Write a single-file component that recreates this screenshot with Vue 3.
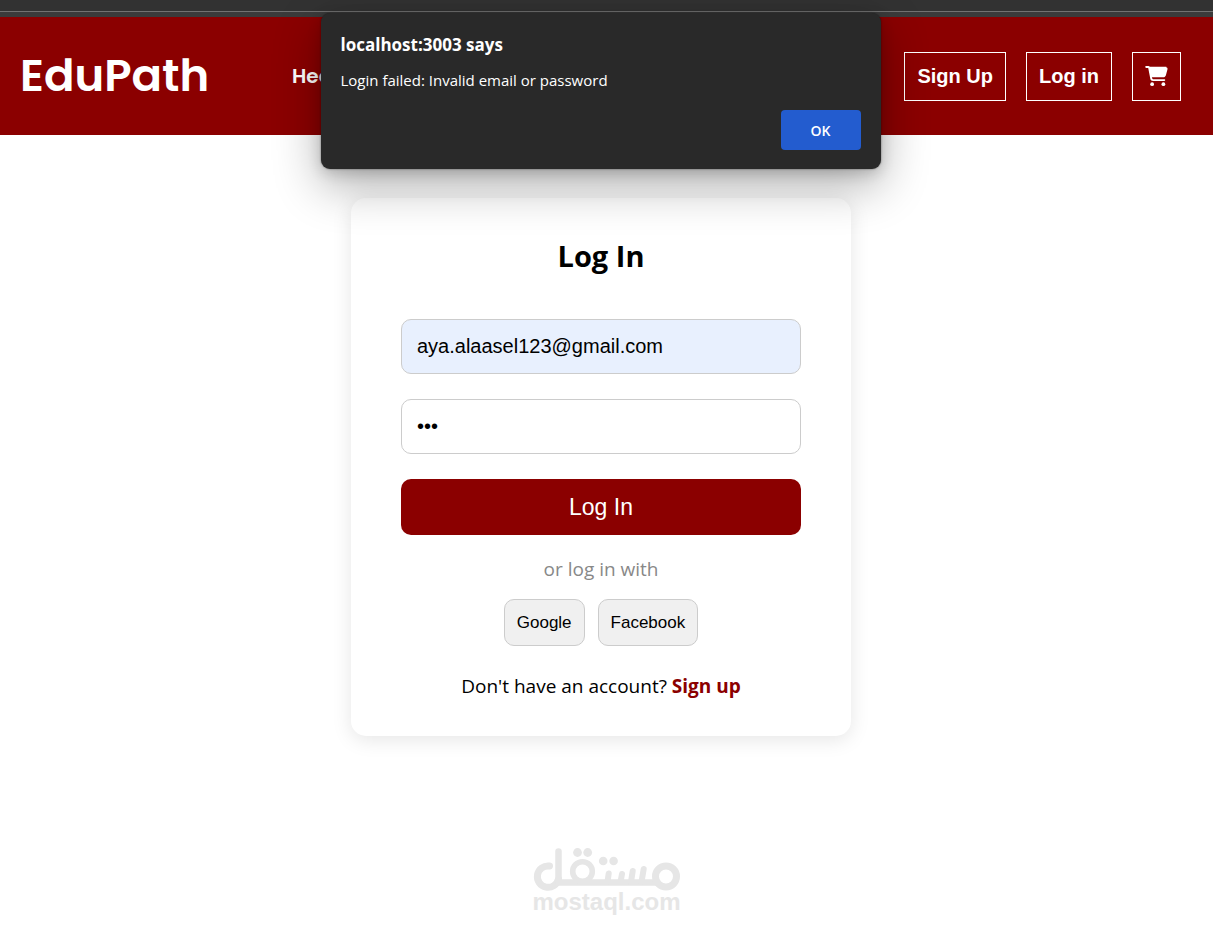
<script setup>
import { ref } from 'vue'

const email = ref('aya.alaasel123@gmail.com')
const password = ref('123')
const dialogOpen = ref(true)
</script>

<template>
  <div class="page">
    <div class="browser-edge"></div>

    <header class="site-header">
      <a class="brand" href="#">EduPath</a>
      <nav class="nav"><a href="#">Hea</a></nav>
      <div class="actions">
        <button type="button" class="outline">Sign Up</button>
        <button type="button" class="outline">Log in</button>
        <button type="button" class="outline cart" aria-label="Cart">
          <svg viewBox="0 0 576 512" width="23" height="20" fill="currentColor" aria-hidden="true">
            <path d="M0 24C0 10.700 10.700 0 24 0h45.500c22 0 41.500 12.800 50.600 32h411c26.300 0 45.500 25 38.600 50.400l-41 152.300c-8.500 31.400-37 53.300-69.500 53.300H170.700l5.400 28.500c2.200 11.300 12.100 19.500 23.600 19.500H488c13.300 0 24 10.700 24 24s-10.700 24-24 24H199.700c-34.600 0-64.300-24.600-70.700-58.500L77.400 54.500c-.7-3.800-4-6.500-7.900-6.500H24C10.700 48 0 37.300 0 24z" />
            <path d="M90 20H540L500 265H150z" />
            <circle cx="176" cy="464" r="48" />
            <circle cx="464" cy="464" r="48" />
          </svg>
        </button>
      </div>
    </header>

    <main class="content">
      <form class="card" @submit.prevent>
        <h2>Log In</h2>
        <input v-model="email" class="field filled" type="email" aria-label="Email" />
        <input v-model="password" class="field" type="password" aria-label="Password" />
        <button type="submit" class="submit">Log In</button>
        <p class="or">or log in with</p>
        <div class="social">
          <button type="button">Google</button>
          <button type="button">Facebook</button>
        </div>
        <p class="signup">Don't have an account? <a href="#">Sign up</a></p>
      </form>
    </main>

    <footer class="mark">
      <svg viewBox="0 0 148 44" width="148" height="44" role="img" aria-label="مستقل" fill="none" stroke="#e6e6e6" stroke-width="7" stroke-linecap="round">
        <path d="M16.500 18A10.700 10.700 0 1 0 25.500 31" />
        <path d="M25.500 3.500V34.500H124" stroke-width="6.500" stroke-linejoin="round" />
        <circle cx="49.500" cy="23.500" r="9.800" stroke-width="5.600" />
        <circle cx="133" cy="28.500" r="10.500" />
        <path d="M75.700 25.500L74.500 34M89 26L87.500 34M99.700 23L98 34M110.700 21L108.500 34" stroke-width="6" />
        <g fill="#e6e6e6" stroke="none">
          <circle cx="44.500" cy="4.500" r="4.400" />
          <circle cx="54.700" cy="4.500" r="4.400" />
          <circle cx="70.200" cy="13" r="4.300" />
          <circle cx="80.600" cy="13" r="4.300" />
        </g>
      </svg>
      <span>mostaql.com</span>
    </footer>

    <section v-if="dialogOpen" class="dialog" role="alertdialog" aria-labelledby="dialog-title" aria-describedby="dialog-text">
      <h1 id="dialog-title">localhost:3003 says</h1>
      <p id="dialog-text">Login failed: Invalid email or password</p>
      <button type="button" @click="dialogOpen = false">OK</button>
    </section>
  </div>
</template>

<style>
body {
  background: #fff;
}
</style>

<style scoped>
.page {
  position: relative;
  display: flex;
  flex-direction: column;
  min-height: 100vh;
  overflow: hidden;
  color: #000;
  font-family: "Segoe UI", "Open Sans", "Noto Sans", sans-serif;
}
.page,
.page * {
  box-sizing: border-box;
}
h1,
h2,
p {
  margin: 0;
}
button {
  cursor: pointer;
}
.browser-edge {
  height: 17px;
  background: linear-gradient(#323232 11px, #727272 11px, #727272 12px, #3b3b3b 12px);
}
.site-header {
  display: flex;
  align-items: center;
  height: 118px;
  padding: 0 32px 0 20px;
  background: #8b0000;
}
.brand {
  width: 272px;
  color: #fff;
  font: 600 45px/60px Poppins, Inter, sans-serif;
  text-decoration: none;
}
.nav a {
  color: #fff;
  font: 600 20px/30px Poppins, Inter, sans-serif;
  text-decoration: none;
}
.actions {
  display: flex;
  gap: 20px;
  margin-left: auto;
}
.outline {
  display: flex;
  align-items: center;
  height: 49px;
  padding: 0 12px;
  border: 1px solid #fff;
  background: transparent;
  color: #fff;
  font: bold 20px "Liberation Sans", Arial, sans-serif;
}
.content {
  display: flex;
  justify-content: center;
  padding: 63px 11px 0 0;
}
.card {
  display: flex;
  flex-direction: column;
  align-items: stretch;
  width: 500px;
  padding: 38px 50px 36px;
  border-radius: 15px;
  background: #fff;
  box-shadow: 0 4px 20px rgba(0, 0, 0, 0.1);
}
.card h2 {
  margin-bottom: 43px;
  font-size: 29px;
  line-height: 40px;
  text-align: center;
}
.field {
  height: 55px;
  margin-bottom: 25px;
  padding: 0 15px;
  border: 1px solid #ccc;
  border-radius: 10px;
  outline: 0;
  background: #fff;
  color: #000;
  font: 20px "Liberation Sans", Arial, sans-serif;
}
.filled {
  background: #e8f0fe;
}
.submit {
  height: 56px;
  border: 0;
  border-radius: 10px;
  background: #8b0000;
  color: #fff;
  font: 23px "Liberation Sans", Arial, sans-serif;
}
.or {
  margin: 20px 0 16px;
  color: #888;
  font-size: 19px;
  line-height: 28px;
  text-align: center;
}
.social {
  display: flex;
  justify-content: center;
  gap: 13px;
}
.social button {
  height: 47px;
  padding: 0 12px;
  border: 1px solid #ccc;
  border-radius: 10px;
  background: #f0f0f0;
  color: #000;
  font: 17px "Liberation Sans", Arial, sans-serif;
}
.signup {
  margin-top: 26px;
  font-size: 19px;
  line-height: 28px;
  text-align: center;
}
.signup a {
  color: #8b0000;
  font-weight: bold;
  text-decoration: none;
}
.mark {
  display: flex;
  flex-direction: column;
  align-items: center;
  margin-top: auto;
  padding-bottom: 22px;
  color: #e6e6e6;
  font: bold 24px/20px "Liberation Sans", Arial, sans-serif;
}
.dialog {
  position: absolute;
  top: 13px;
  left: calc(50% - 6px);
  width: 560px;
  padding: 20px 20px 19px;
  transform: translateX(-50%);
  border-radius: 9px;
  background: #292929;
  box-shadow: 0 16px 48px rgba(0, 0, 0, 0.32), 0 4px 14px rgba(0, 0, 0, 0.16), 0 0 2px rgba(0, 0, 0, 0.5);
  color: #fff;
}
.dialog h1 {
  font-size: 17px;
  line-height: 24px;
}
.dialog p {
  margin-top: 11px;
  font-size: 15px;
  line-height: 24px;
}
.dialog button {
  display: block;
  width: 80px;
  height: 40px;
  margin: 18px 0 0 auto;
  border: 0;
  border-radius: 4px;
  background: #235ccf;
  color: #fff;
  font: 600 14px "Segoe UI", "Open Sans", sans-serif;
}
</style>
